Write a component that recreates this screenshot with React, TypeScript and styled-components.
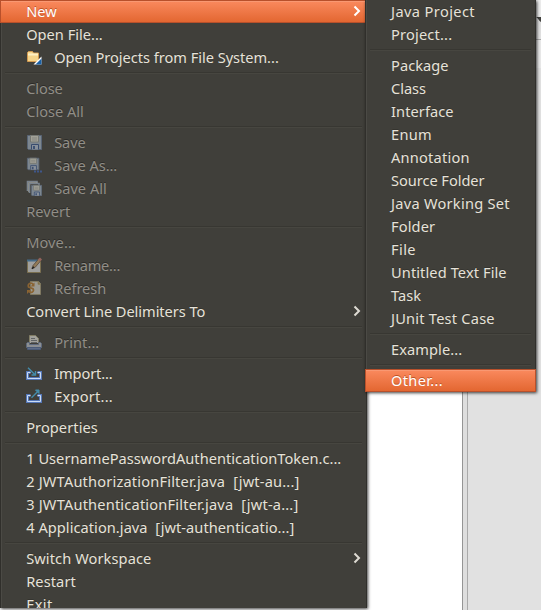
import React, { useLayoutEffect, useRef, useState } from "react";
import styled, { createGlobalStyle, css } from "styled-components";

const GlobalStyle = createGlobalStyle`
  * { box-sizing: border-box; }
  html, body { margin: 0; padding: 0; overflow: hidden; }
`;

const Window = styled.div`
  position: relative;
  width: 541px;
  height: 610px;
  overflow: hidden;
  background: #fff;
  font-family: "Noto Sans", "Open Sans", sans-serif;
  font-size: 14.6px;
`;

const Workbench = styled.div`
  display: flex;
  height: 100%;
  padding-left: 366px;
`;

const Editor = styled.div`
  width: 96px;
  background: #fff;
`;

const Sash = styled.div`
  width: 6px;
  background: #dedede;
  border-left: 1px solid #959595;
  border-right: 1px solid #aaa;
`;

const SideView = styled.div`
  flex: 1;
  display: flex;
  flex-direction: column;
  background: #e1e1e1;
`;

const SideTabs = styled.div`
  display: flex;
  justify-content: flex-end;
  height: 40px;
  background: linear-gradient(#ececec 0 17px, #dedede 21px, #e2e2e2);
  border-bottom: 1px solid #aaa;
`;

const TabCurve = styled.svg`
  width: 6px;
  height: 40px;
`;

const SideToolbar = styled.div`
  height: 28px;
  background: #e9e9e9;
`;

const Menu = styled.div<{ $sub?: boolean }>`
  position: absolute;
  top: 0;
  left: ${(p) => (p.$sub ? 365 : 0)}px;
  width: ${(p) => (p.$sub ? 171 : 367)}px;
  height: ${(p) => (p.$sub ? 392 : 608)}px;
  background: #403f3a;
  box-shadow: inset 1px 0 #302f2b, inset 2px 0 #4b4a45, inset -1px 0 #302f2b,
    1px 1px 3px rgba(0, 0, 0, 0.75);
  --indent: ${(p) => (p.$sub ? 26 : 26.2)}px;
`;

const MenuBody = styled.div`
  height: 100%;
  overflow: hidden;
`;

const Row = styled.div<{ $selected?: boolean; $disabled?: boolean }>`
  display: flex;
  align-items: flex-start;
  height: 23px;
  padding-left: var(--indent);
  padding-right: 6px;
  color: ${(p) => (p.$disabled ? "#918e87" : "#e6e2d9")};
  text-shadow: 0 -1px ${(p) => (p.$disabled ? "#2c2b28" : "#35342f")};
  ${(p) =>
    p.$selected &&
    css`
      color: #fff;
      text-shadow: 0 -1px #bd5327;
      background: linear-gradient(#fb8b60, #e2652f);
      box-shadow: inset 0 0 0 1px #b8502b, inset 0 2px #f99872;
    `}
`;

const IconSlot = styled.span<{ $dim?: boolean }>`
  flex: none;
  width: 28px;
  height: 16px;
  margin-top: 3px;
  opacity: ${(p) => (p.$dim ? 0.62 : 1)};
  svg { display: block; width: 16px; height: 16px; }
`;

const Text = styled.span`
  height: 23px;
  line-height: 23px;
  white-space: pre;
`;

const Chevron = styled.svg`
  flex: none;
  width: 8px;
  height: 12px;
  margin: 5px 0 0 auto;
`;

const Separator = styled.div`
  height: 2px;
  margin: 3px 5px;
  border-top: 1px solid #383732;
  border-bottom: 1px solid #474640;
`;

function Label({ text, width }: { text: string; width: number }) {
  const ref = useRef<HTMLSpanElement>(null);
  const [tracking, setTracking] = useState(0);
  useLayoutEffect(() => {
    const el = ref.current;
    if (el) setTracking((width - 1.4 - el.getBoundingClientRect().width) / (text.length - 1));
  }, [text, width]);
  return (
    <Text ref={ref} style={{ letterSpacing: tracking }}>
      {text}
    </Text>
  );
}

const Floppy = () => (
  <>
    <path d="M.5.5h14v14h-13l-1-1z" fill="#a3b3c6" stroke="#687c99" />
    <path d="M3.5.5h8v6.5h-8z" fill="#deded0" stroke="#979c96" />
    <path d="M5 3h5M5 5h5" stroke="#b0b0aa" />
    <path d="M4.5 14.5v-5h7v5" fill="#b5c2d5" stroke="#34558f" />
    <path d="M6 11h2v3H6z" fill="#3d5e97" />
  </>
);

const icons: Record<string, React.ReactNode> = {
  folder: (
    <>
      <path d="M1.5 12.5v-9l1-1h4l1 1.5h5v8.5z" fill="#f6d58b" stroke="#d29a50" />
      <path d="M2 5.5h10" stroke="#fff0c4" strokeWidth="2" />
      <path d="M7.5 15.5L15.5 7.5v8z" fill="#fff" />
      <path d="M9.5 15.5l6-6v6z" fill="#1a61a5" />
    </>
  ),
  save: <g transform="translate(1 1)"><Floppy /></g>,
  saveAs: (
    <>
      <g transform="translate(1 .8) scale(.82)"><Floppy /></g>
      <path d="M8 14.5h2M11 14.5h2M14 14.5h2" stroke="#3f67bb" strokeWidth="2" />
    </>
  ),
  saveAll: (
    <>
      <path d="M1.5 11V1.5H11v2M3.5 13V3.5H13v2" fill="none" stroke="#9cacbf" strokeWidth="1.6" />
      <path d="M2.5 12V2.5h9" fill="none" stroke="#d3d6ce" strokeWidth=".7" />
      <g transform="translate(5 5) scale(.74)"><Floppy /></g>
    </>
  ),
  rename: (
    <>
      <path d="M1.5 3.5h13v12h-13z" fill="#dcdcdc" stroke="#9d8c5d" />
      <path d="M1 3.5h11" stroke="#4886b9" strokeWidth="2" />
      <path d="M6 11.5l1-3 6-7 2 2-6 7z" fill="#c6a06b" stroke="#624d3b" strokeWidth=".8" />
      <path d="M12 2.6L14 .6l2 2-2 2z" fill="#c87972" />
      <path d="M6 11.7l2-2" stroke="#111" strokeWidth="1.5" />
    </>
  ),
  refresh: (
    <>
      <path d="M4.5 1.5h8l2 2v11h-10z" fill="#d3d1c6" stroke="#a79c79" />
      <path d="M12 1.5v2.8h2.5" fill="#ad9457" stroke="#ad9457" strokeWidth=".7" />
      <path d="M7.5 5C5.5 1.5 1 3.8 2.6 7L7 8.7C8.8 11.5 5 14 2.8 11" fill="none" stroke="#b7792e" strokeWidth="1.8" />
      <path d="M8.5 2.5v4h-4zM1 14v-4h4z" fill="#b7792e" />
    </>
  ),
  print: (
    <>
      <path d="M3.5 9V1.5h6l3 3V9" fill="#deded7" stroke="#aaa380" />
      <path d="M5 4.5h4M5 6.5h6M5 8.5h6" stroke="#767b82" />
      <path d="M.5 9.5l1-1h2v2h9v-2h2l1 1v4H.5z" fill="#bbc1c9" stroke="#7184a5" />
      <path d="M1.5 13.5h13v2h-13z" fill="#7189b6" stroke="#526d9f" />
    </>
  ),
  import: (
    <>
      <path d="M4.5 7.5h-3v6h13v-6h-3" fill="none" stroke="#5577b7" strokeWidth="3" />
      <path d="M4.5 7.5h-3v6h13v-6h-3" fill="none" stroke="#cbdcf5" />
      <path d="M2 2.7l7 7M9.5 6v4H5.5" fill="none" stroke="#438baa" strokeWidth="1.4" />
    </>
  ),
  export: (
    <>
      <path d="M4.5 7.5h-3v6h13v-6h-3" fill="none" stroke="#5577b7" strokeWidth="3" />
      <path d="M4.5 7.5h-3v6h13v-6h-3" fill="none" stroke="#cbdcf5" />
      <path d="M5.5 9.7l6.5-6.5" stroke="#438baa" strokeWidth="1.4" />
      <path d="M9.5 2H13v3.5z" fill="#438baa" stroke="#438baa" />
    </>
  ),
};

type Item = {
  text: string;
  width: number;
  icon?: string;
  disabled?: boolean;
  selected?: boolean;
  arrow?: boolean;
};
type Entry = Item | null;

const fileMenu: Entry[] = [
  { text: "New", width: 32, selected: true, arrow: true },
  { text: "Open File...", width: 78 },
  { text: "Open Projects from File System...", width: 226, icon: "folder" },
  null,
  { text: "Close", width: 38, disabled: true },
  { text: "Close All", width: 59, disabled: true },
  null,
  { text: "Save", width: 33, icon: "save", disabled: true },
  { text: "Save As...", width: 64.5, icon: "saveAs", disabled: true },
  { text: "Save All", width: 54, icon: "saveAll", disabled: true },
  { text: "Revert", width: 45.5, disabled: true },
  null,
  { text: "Move...", width: 51, disabled: true },
  { text: "Rename...", width: 67.5, icon: "rename", disabled: true },
  { text: "Refresh", width: 53.5, icon: "refresh", disabled: true },
  { text: "Convert Line Delimiters To", width: 180.5, arrow: true },
  null,
  { text: "Print...", width: 46.5, icon: "print", disabled: true },
  null,
  { text: "Import...", width: 60, icon: "import" },
  { text: "Export...", width: 60, icon: "export" },
  null,
  { text: "Properties", width: 73 },
  null,
  { text: "1 UsernamePasswordAuthenticationToken.c...", width: 316.5 },
  { text: "2 JWTAuthorizationFilter.java  [jwt-au...]", width: 274.5 },
  { text: "3 JWTAuthenticationFilter.java  [jwt-a...]", width: 273.5 },
  { text: "4 Application.java  [jwt-authenticatio...]", width: 269.5 },
  null,
  { text: "Switch Workspace", width: 126.5, arrow: true },
  { text: "Restart", width: 51 },
  { text: "Exit", width: 27.5 },
];

const newMenu: Entry[] = [
  { text: "Java Project", width: 85 },
  { text: "Project...", width: 62.5 },
  null,
  { text: "Package", width: 59 },
  { text: "Class", width: 36.5 },
  { text: "Interface", width: 64 },
  { text: "Enum", width: 42 },
  { text: "Annotation", width: 80 },
  { text: "Source Folder", width: 95 },
  { text: "Java Working Set", width: 120 },
  { text: "Folder", width: 45.5 },
  { text: "File", width: 26 },
  { text: "Untitled Text File", width: 117 },
  { text: "Task", width: 31.5 },
  { text: "JUnit Test Case", width: 105 },
  null,
  { text: "Example...", width: 72.5 },
  null,
  { text: "Other...", width: 53, selected: true },
];

function Entries({ list }: { list: Entry[] }) {
  return (
    <MenuBody>
      {list.map((item, i) =>
        item ? (
          <Row key={i} $selected={item.selected} $disabled={item.disabled}>
            {item.icon && (
              <IconSlot $dim={item.disabled}>
                <svg viewBox="0 0 16 16">{icons[item.icon]}</svg>
              </IconSlot>
            )}
            <Label text={item.text} width={item.width} />
            {item.arrow && (
              <Chevron viewBox="0 0 8 12">
                <path
                  d="M1.5 1.5L6 6 1.5 10.5"
                  fill="none"
                  stroke={item.selected ? "#fff" : "#dedbd3"}
                  strokeWidth="2"
                />
              </Chevron>
            )}
          </Row>
        ) : (
          <Separator key={i} />
        )
      )}
    </MenuBody>
  );
}

export default function App() {
  return (
    <>
      <GlobalStyle />
      <Window>
        <Workbench>
          <Editor />
          <Sash />
          <SideView>
            <SideTabs>
              <TabCurve viewBox="0 0 6 40">
                <path d="M1 17h5v5C4 21 3 18 1 17z" fill="#42423f" />
              </TabCurve>
            </SideTabs>
            <SideToolbar />
          </SideView>
        </Workbench>
        <Menu>
          <Entries list={fileMenu} />
        </Menu>
        <Menu $sub>
          <Entries list={newMenu} />
        </Menu>
      </Window>
    </>
  );
}
